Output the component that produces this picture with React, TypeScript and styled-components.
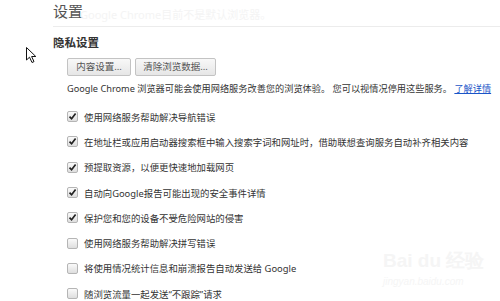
import React from 'react';
import styled, { createGlobalStyle } from 'styled-components';

const GlobalStyle = createGlobalStyle`
  html, body {
    margin: 0;
    padding: 0;
    background: #fff;
  }
  body {
    font-family: "Noto Sans", "Noto Sans CJK SC", sans-serif;
    color: #333;
  }
`;

const Page = styled.div`
  position: relative;
  width: 500px;
  height: 301px;
  overflow: hidden;
  padding-left: 53px;
  box-sizing: border-box;
`;

const Header = styled.div`
  display: flex;
  align-items: center;
  justify-content: space-between;
  height: 27px;
  width: 478px;
  border-bottom: 1px solid #ececec;
  box-sizing: border-box;
`;

const Title = styled.h1`
  margin: 0 0 4px;
  font-size: 15px;
  font-weight: normal;
  color: #555;
  line-height: 18px;
`;

const Ghost = styled.div`
  position: absolute;
  left: 80px;
  top: 6px;
  font-size: 11px;
  color: #f4f4f4;
  white-space: nowrap;
`;

const Search = styled.div`
  width: 30px;
  height: 18px;
  margin-bottom: 4px;
  border: 1px solid #d4d4d4;
  border-right: none;
  border-radius: 2px 0 0 2px;
  box-sizing: border-box;
  font-size: 8.5px;
  color: #aaa;
  line-height: 16px;
  padding-left: 3px;
  white-space: nowrap;
  overflow: hidden;
`;

const Section = styled.div`
  padding-top: 9px;
`;

const SectionTitle = styled.h3`
  margin: 0;
  font-size: 11.5px;
  font-weight: bold;
  color: #333;
  line-height: 14px;
`;

const Body = styled.div`
  padding-left: 14px;
`;

const ButtonRow = styled.div`
  display: flex;
  gap: 4px;
  margin-top: 8px;
`;

const Button = styled.div<{ $w: number }>`
  width: ${(p) => p.$w}px;
  height: 18px;
  box-sizing: border-box;
  border: 1px solid #c3c3c3;
  border-radius: 2px;
  background: linear-gradient(#f8f8f8, #e6e6e6);
  font-size: 9.5px;
  color: #555;
  line-height: 16px;
  text-align: center;
  white-space: nowrap;
`;

const Intro = styled.p`
  margin: 7px 0 0;
  font-size: 9.2px;
  line-height: 12px;
  color: #333;
  white-space: nowrap;
`;

const More = styled.span`
  color: #1a55c8;
  text-decoration: underline;
`;

const List = styled.div`
  margin-top: 9px;
  display: flex;
  flex-direction: column;
`;

const Row = styled.div`
  display: flex;
  align-items: center;
  height: 25.3px;
  gap: 6px;
  font-size: 9.4px;
  color: #333;
  white-space: nowrap;
`;

const Box = styled.span`
  width: 11px;
  height: 11px;
  box-sizing: border-box;
  border: 1px solid #b5b5b5;
  border-radius: 2px;
  background: linear-gradient(#fafafa, #dedede);
  display: flex;
  align-items: center;
  justify-content: center;
  flex-shrink: 0;
`;

const Cursor = styled.svg`
  position: absolute;
  left: 26px;
  top: 47px;
`;

const Watermark = styled.div`
  position: absolute;
  left: 383px;
  top: 248px;
  color: #f5f5f5;
  font-family: "Liberation Sans", sans-serif;
  .logo {
    font-size: 19px;
    font-weight: bold;
  }
  .url {
    font-size: 10px;
    font-style: italic;
    margin-top: 2px;
  }
`;

const Check = () => (
  <svg width="9" height="9" viewBox="0 0 9 9">
    <path d="M1.5 4.6 L3.6 6.8 L7.6 1.6" fill="none" stroke="#222" strokeWidth="1.7" />
  </svg>
);

const options: [boolean, string][] = [
  [true, '使用网络服务帮助解决导航错误'],
  [true, '在地址栏或应用启动器搜索框中输入搜索字词和网址时，借助联想查询服务自动补齐相关内容'],
  [true, '预提取资源，以便更快速地加载网页'],
  [true, '自动向Google报告可能出现的安全事件详情'],
  [true, '保护您和您的设备不受危险网站的侵害'],
  [false, '使用网络服务帮助解决拼写错误'],
  [false, '将使用情况统计信息和崩溃报告自动发送给 Google'],
  [false, '随浏览流量一起发送“不跟踪”请求'],
];

const App = () => (
  <>
    <GlobalStyle />
    <Page>
      <Header>
        <Title>设置</Title>
        <Search>在设置</Search>
      </Header>
      <Ghost>Google Chrome目前不是默认浏览器。</Ghost>
      <Section>
        <SectionTitle>隐私设置</SectionTitle>
        <Body>
          <ButtonRow>
            <Button $w={64}>内容设置...</Button>
            <Button $w={81}>清除浏览数据...</Button>
          </ButtonRow>
          <Intro>
            Google Chrome 浏览器可能会使用网络服务改善您的浏览体验。 您可以视情况停用这些服务。 <More>了解详情</More>
          </Intro>
          <List>
            {options.map(([on, label]) => (
              <Row key={label}>
                <Box>{on && <Check />}</Box>
                {label}
              </Row>
            ))}
          </List>
        </Body>
      </Section>
      <Cursor width="11" height="17" viewBox="0 0 11 17">
        <path d="M0.5 0.5 L0.5 13 L3.5 10.2 L6 15.5 L8 14.6 L5.6 9.5 L9.8 9.5 Z" fill="#fff" stroke="#111" strokeWidth="1" />
      </Cursor>
      <Watermark>
        <div className="logo">Bai du 经验</div>
        <div className="url">jingyan.baidu.com</div>
      </Watermark>
    </Page>
  </>
);

export default App;
